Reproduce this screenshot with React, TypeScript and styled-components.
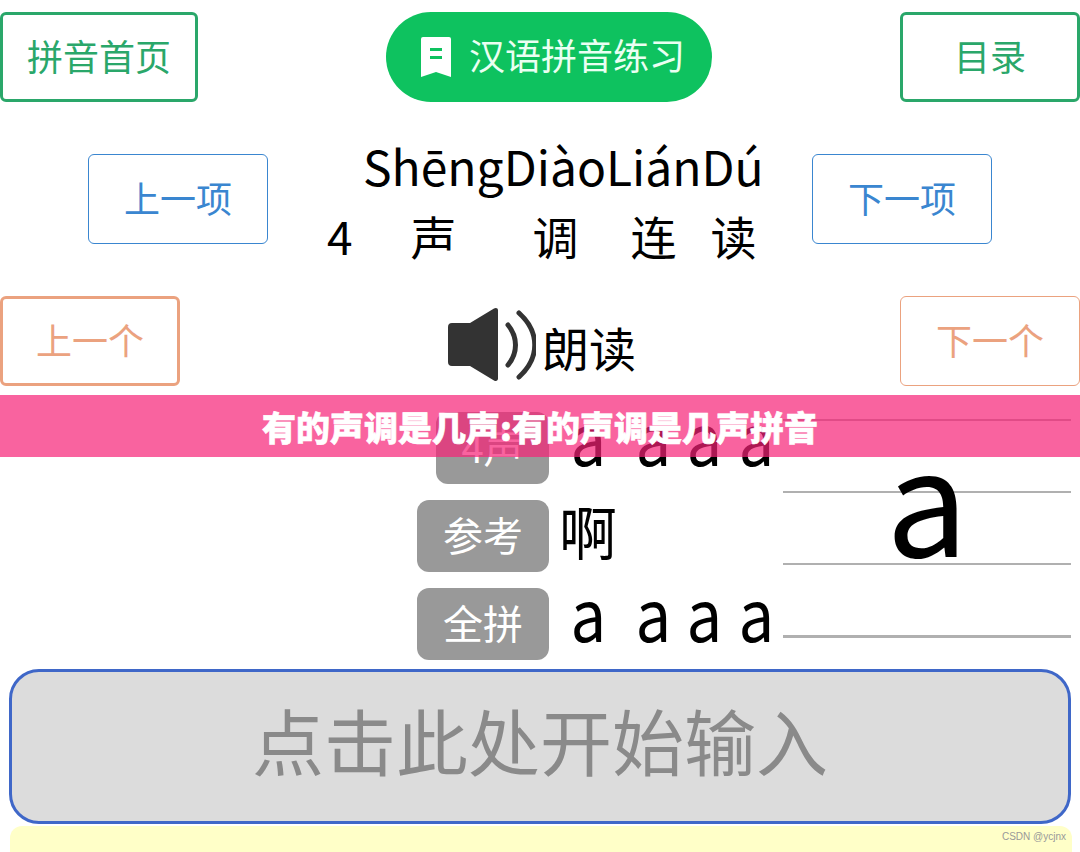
import React from "react";
import styled, { createGlobalStyle } from "styled-components";

const GlobalStyle = createGlobalStyle`
  html, body {
    margin: 0;
    padding: 0;
    background: #fff;
    font-family: "Noto Sans CJK SC", "Noto Sans", sans-serif;
  }
`;

const BookmarkIcon = () => (
  <svg width="30" height="40" viewBox="0 0 30 40">
    <path
      d="M2 0h26a2 2 0 0 1 2 2v38l-15-5-15 5V2a2 2 0 0 1 2-2z"
      fill="#fff"
    />
    <rect x="9" y="11" width="12" height="3" fill="#0ec25f" />
    <rect x="9" y="19" width="12" height="3" fill="#0ec25f" />
  </svg>
);

const SpeakerIcon = () => (
  <svg width="88" height="73" viewBox="0 0 88 73">
    <path
      d="M4 15h18L46 .6c2-1.100 4-.4 4 1.900v68c0 2.300-2 3-4 1.900L22 58H4a4 4 0 0 1-4-4V19a4 4 0 0 1 4-4z"
      fill="#333"
    />
    <path
      d="M60 17c10 12 10 28 0 40"
      fill="none"
      stroke="#333"
      strokeWidth="5"
      strokeLinecap="round"
    />
    <path
      d="M71 5c21 19 21 45 0 64"
      fill="none"
      stroke="#333"
      strokeWidth="5"
      strokeLinecap="round"
    />
  </svg>
);

export default function App() {
  return (
    <Page>
      <GlobalStyle />
      <NavRow>
        <OutlineButton $color="#2aa76a" $border={3} $width={198}>
          拼音首页
        </OutlineButton>
        <TitlePill>
          <BookmarkIcon />
          <PillText>汉语拼音练习</PillText>
        </TitlePill>
        <OutlineButton $color="#2aa76a" $border={3} $width={180}>
          目录
        </OutlineButton>
      </NavRow>

      <LessonRow>
        <OutlineButton $color="#3a86d0" $border={1} $width={180}>
          上一项
        </OutlineButton>
        <LessonTitle>
          <Pinyin>ShēngDiàoLiánDú</Pinyin>
          <HanziLine>
            <Hanzi $gap={0}>4</Hanzi>
            <Hanzi $gap={58}>声</Hanzi>
            <Hanzi $gap={76}>调</Hanzi>
            <Hanzi $gap={52}>连</Hanzi>
            <Hanzi $gap={34}>读</Hanzi>
          </HanziLine>
        </LessonTitle>
        <OutlineButton $color="#3a86d0" $border={1} $width={180}>
          下一项
        </OutlineButton>
      </LessonRow>

      <ReadRow>
        <OutlineButton $color="#eba27f" $border={3} $width={180}>
          上一个
        </OutlineButton>
        <ReadAloud>
          <SpeakerIcon />
          <ReadText>朗读</ReadText>
        </ReadAloud>
        <OutlineButton $color="#eba27f" $border={1} $width={180}>
          下一个
        </OutlineButton>
      </ReadRow>

      <Practice>
        <Rows>
          <PracticeRow>
            <Label $width={113}>4声</Label>
            <Syllables>
              <Syllable $gap={0}>a</Syllable>
              <Syllable $gap={24}>a</Syllable>
              <Syllable $gap={11}>a</Syllable>
              <Syllable $gap={11}>a</Syllable>
            </Syllables>
          </PracticeRow>
          <PracticeRow>
            <Label $width={132}>参考</Label>
            <Reference>啊</Reference>
          </PracticeRow>
          <PracticeRow>
            <Label $width={132}>全拼</Label>
            <Syllables>
              <Syllable $gap={0}>a</Syllable>
              <Syllable $gap={24}>a</Syllable>
              <Syllable $gap={11}>a</Syllable>
              <Syllable $gap={11}>a</Syllable>
            </Syllables>
          </PracticeRow>
        </Rows>
        <Staff>
          <Rule $weight={2} />
          <Rule $weight={2} />
          <Rule $weight={2} />
          <Rule $weight={3} />
          <BigLetter>a</BigLetter>
        </Staff>
      </Practice>

      <InputBox>点击此处开始输入</InputBox>
      <Tray>
        <Watermark>CSDN @ycjnx</Watermark>
      </Tray>

      <Banner>有的声调是几声:有的声调是几声拼音</Banner>
    </Page>
  );
}

const Page = styled.div`
  position: relative;
  width: 1080px;
  height: 852px;
  overflow: hidden;
  background: #fff;
  padding-top: 12px;
  box-sizing: border-box;
`;

const NavRow = styled.div`
  display: flex;
  justify-content: space-between;
  align-items: stretch;
  height: 90px;
`;

const OutlineButton = styled.div<{
  $color: string;
  $border: number;
  $width: number;
}>`
  box-sizing: border-box;
  width: ${(p) => p.$width}px;
  height: 90px;
  display: flex;
  align-items: center;
  justify-content: center;
  padding-bottom: 5px;
  border: ${(p) => p.$border}px solid ${(p) => p.$color};
  border-radius: 6px;
  color: ${(p) => p.$color};
  font-size: 36px;
  background: #fff;
`;

const TitlePill = styled.div`
  width: 326px;
  box-sizing: border-box;
  display: flex;
  align-items: center;
  justify-content: center;
  gap: 18px;
  padding-left: 8px;
  border-radius: 45px;
  background: #0ec25f;
  color: #eafff2;
  font-size: 36px;
`;

const PillText = styled.span`
  margin-bottom: 6px;
`;

const LessonRow = styled.div`
  display: grid;
  grid-template-columns: 180px 1fr 180px;
  grid-template-rows: 90px;
  margin-top: 52px;
  padding: 0 88px;
`;

const LessonTitle = styled.div`
  display: flex;
  flex-direction: column;
  align-items: flex-start;
  color: #000;
`;

const Pinyin = styled.div`
  margin: -23px 0 0 95px;
  font-size: 48px;
  line-height: 68px;
  white-space: nowrap;
`;

const HanziLine = styled.div`
  display: flex;
  align-items: center;
  margin-left: 59px;
  font-size: 46px;
  line-height: 66px;
  margin-top: 3px;
`;

const Hanzi = styled.span<{ $gap: number }>`
  margin-left: ${(p) => p.$gap}px;
`;

const ReadRow = styled.div`
  display: flex;
  justify-content: space-between;
  height: 90px;
  margin-top: 52px;
`;

const ReadAloud = styled.div`
  display: flex;
  align-items: center;
  gap: 6px;
  margin-left: 4px;
  padding-top: 7px;
  font-size: 47px;
  color: #000;
`;

const ReadText = styled.span`
  margin-top: 3px;
`;

const Practice = styled.div`
  display: grid;
  grid-template-columns: 783px 288px;
  margin-top: 26px;
`;

const Rows = styled.div`
  display: flex;
  flex-direction: column;
  gap: 16px;
`;

const PracticeRow = styled.div`
  display: grid;
  grid-template-columns: 549px 234px;
  height: 72px;
`;

const Label = styled.div<{ $width: number }>`
  justify-self: end;
  width: ${(p) => p.$width}px;
  display: flex;
  align-items: center;
  justify-content: center;
  padding-bottom: 4px;
  box-sizing: border-box;
  border-radius: 12px;
  background: #999;
  color: #fff;
  font-size: 40px;
`;

const Syllables = styled.div`
  display: flex;
  align-items: center;
  box-sizing: border-box;
  height: 72px;
  padding: 0 0 26px 19px;
  font-size: 72px;
  line-height: 72px;
  color: #000;
`;

const Syllable = styled.span<{ $gap: number }>`
  display: inline-block;
  margin-left: ${(p) => p.$gap}px;
  transform: scaleX(0.88);
`;

const Reference = styled.div`
  padding-left: 10px;
  font-size: 58px;
  line-height: 60px;
  color: #000;
`;

const Staff = styled.div`
  position: relative;
  display: flex;
  flex-direction: column;
  justify-content: space-between;
  height: 219px;
  margin-top: 7px;
`;

const Rule = styled.div<{ $weight: number }>`
  height: ${(p) => p.$weight}px;
  background: #b0b0b0;
`;

const BigLetter = styled.div`
  position: absolute;
  left: 0;
  right: 0;
  top: -10px;
  text-align: center;
  font-size: 146px;
  line-height: 170px;
  color: #000;
`;

const InputBox = styled.div`
  box-sizing: border-box;
  height: 155px;
  margin: 9px 9px 0;
  display: flex;
  align-items: center;
  justify-content: center;
  padding-bottom: 16px;
  border: 3px solid #3f67c8;
  border-radius: 30px;
  background: #dcdcdc;
  color: #8a8a8a;
  font-size: 72px;
`;

const Tray = styled.div`
  position: relative;
  height: 40px;
  margin: 2px 8px 0 10px;
  border-radius: 12px 12px 0 0;
  background: #ffffc8;
`;

const Watermark = styled.div`
  position: absolute;
  right: 6px;
  top: 4px;
  font-family: "Liberation Sans", sans-serif;
  font-size: 10px;
  line-height: 14px;
  color: #999;
`;

const Banner = styled.div`
  position: absolute;
  left: 0;
  right: 0;
  top: 395px;
  height: 62px;
  display: flex;
  align-items: center;
  justify-content: center;
  background: rgba(246, 33, 118, 0.7);
  color: #fff;
  font-size: 34px;
  font-weight: 900;
  -webkit-text-stroke: 0.6px #fff;
  white-space: nowrap;
`;
